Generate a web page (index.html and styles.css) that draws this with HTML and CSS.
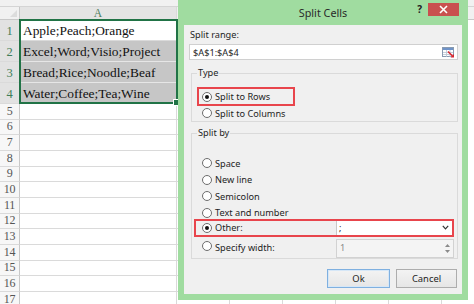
FILE: index.html
```html
<!DOCTYPE html>
<html>
<head>
<meta charset="utf-8">
<link rel="stylesheet" href="styles.css">
</head>
<body>
<div class="sheet">
  <div class="topstrip"></div>
  <div class="row head">
    <div class="rh corner"><span class="tri"></span></div>
    <div class="cell a colhead">A</div>
    <div class="cell b"></div><div class="cell b"></div><div class="cell b"></div><div class="cell b"></div><div class="cell b"></div><div class="cell b"></div>
  </div>
  <div class="row big"><div class="rh sel">1</div><div class="cell a">Apple;Peach;Orange</div><div class="cell b"></div></div>
  <div class="row big"><div class="rh sel">2</div><div class="cell a shade">Excel;Word;Visio;Project</div><div class="cell b"></div></div>
  <div class="row big"><div class="rh sel">3</div><div class="cell a shade">Bread;Rice;Noodle;Beaf</div><div class="cell b"></div></div>
  <div class="row big"><div class="rh sel">4</div><div class="cell a shade">Water;Coffee;Tea;Wine</div><div class="cell b"></div></div>
  <div class="row"><div class="rh">5</div><div class="cell a"></div><div class="cell b"></div></div>
  <div class="row"><div class="rh">6</div><div class="cell a"></div><div class="cell b"></div></div>
  <div class="row"><div class="rh">7</div><div class="cell a"></div><div class="cell b"></div></div>
  <div class="row"><div class="rh">8</div><div class="cell a"></div><div class="cell b"></div></div>
  <div class="row"><div class="rh">9</div><div class="cell a"></div><div class="cell b"></div></div>
  <div class="row"><div class="rh">10</div><div class="cell a"></div><div class="cell b"></div></div>
  <div class="row"><div class="rh">11</div><div class="cell a"></div><div class="cell b"></div></div>
  <div class="row"><div class="rh">12</div><div class="cell a"></div><div class="cell b"></div></div>
  <div class="row"><div class="rh">13</div><div class="cell a"></div><div class="cell b"></div></div>
  <div class="row"><div class="rh">14</div><div class="cell a"></div><div class="cell b"></div></div>
  <div class="row"><div class="rh">15</div><div class="cell a"></div><div class="cell b"></div></div>
  <div class="row"><div class="rh">16</div><div class="cell a"></div><div class="cell b"></div></div>
  <div class="row"><div class="rh">17</div><div class="cell a"></div><div class="cell b"></div><div class="cell b"></div><div class="cell b"></div><div class="cell b"></div><div class="cell b"></div><div class="cell b"></div></div>
  <div class="selection"><span class="handle"></span></div>
</div>

<div class="dialog">
  <div class="titlebar">
    <span class="title">Split Cells</span>
    <span class="help">?</span>
    <span class="close"><svg width="9" height="9" viewBox="0 0 9 9"><path d="M1 1L8 8M8 1L1 8" stroke="#fff" stroke-width="1.6"/></svg></span>
  </div>
  <div class="body">
    <div class="label">Split range:</div>
    <div class="range">
      <span>$A$1:$A$4</span>
      <svg class="picker" width="13" height="11" viewBox="0 0 13 11">
        <rect x="0.5" y="0.5" width="11" height="9" fill="#fff" stroke="#8a9bb0"/>
        <rect x="1" y="1" width="10" height="2" fill="#6f93c8"/>
        <path d="M1 5.5H11M1 7.5H11M4.5 3V10M8 3V10" stroke="#b9c4d2" stroke-width="0.8"/>
        <path d="M6 4.5L10.5 9" stroke="#d9272e" stroke-width="1.6"/>
        <path d="M12 10.5H8.5L12 7Z" fill="#d9272e"/>
      </svg>
    </div>

    <fieldset class="group type">
      <legend>Type</legend>
      <div class="opt mark-rows"><span class="radio on"></span>Split to Rows</div>
      <div class="opt"><span class="radio"></span>Split to Columns</div>
    </fieldset>

    <fieldset class="group by">
      <legend>Split by</legend>
      <div class="opt"><span class="radio"></span>Space</div>
      <div class="opt"><span class="radio"></span>New line</div>
      <div class="opt"><span class="radio"></span>Semicolon</div>
      <div class="opt"><span class="radio"></span>Text and number</div>
      <div class="opt mark-other"><span class="radio on"></span><span class="opt-label">Other:</span>
        <div class="combo"><span>;</span><svg width="7" height="5" viewBox="0 0 7 5"><path d="M0.8 0.8L3.5 3.8L6.2 0.8" fill="none" stroke="#333" stroke-width="1.2"/></svg></div>
      </div>
      <div class="opt spec"><span class="radio"></span><span class="opt-label">Specify width:</span>
        <div class="spin"><span>1</span>
          <span class="arrows">
            <svg width="5" height="3" viewBox="0 0 5 3"><path d="M0 3L2.5 0L5 3Z" fill="#8a8a8a"/></svg>
            <svg width="5" height="3" viewBox="0 0 5 3"><path d="M0 0L2.5 3L5 0Z" fill="#8a8a8a"/></svg>
          </span>
        </div>
      </div>
    </fieldset>

    <div class="buttons">
      <button class="btn default">Ok</button>
      <button class="btn">Cancel</button>
    </div>
  </div>
</div>
</body>
</html>
```

FILE: styles.css
```css
html, body {
  margin: 0;
  padding: 0;
  width: 474px;
  height: 304px;
  overflow: hidden;
  background: #fff;
}

.sheet {
  position: relative;
  width: 474px;
  height: 304px;
  overflow: hidden;
  font-family: "Liberation Serif", "Times New Roman", serif;
}

.topstrip {
  height: 6px;
  background: #f1f1f1;
  border-bottom: 1px solid #d4d4d4;
}

.row {
  display: flex;
  height: 15.67px;
  box-sizing: border-box;
}
.row.big { height: 21px; }
.row.head { height: 13px; }

.rh {
  width: 20px;
  flex: none;
  box-sizing: border-box;
  background: #f7f7f7;
  border-right: 1px solid #c8c8c8;
  border-bottom: 1px solid #dadada;
  color: #555;
  font-size: 12px;
  line-height: 13px;
  display: flex;
  align-items: center;
  justify-content: center;
  letter-spacing: -0.3px;
}
.rh.sel {
  background: #e2e2e2;
  color: #3f7d58;
  font-size: 12.5px;
  padding-top: 2px;
}
.corner {
  background: #f1f1f1;
  border-bottom: 1px solid #c8c8c8;
  position: relative;
}
.tri {
  position: absolute;
  right: 2px;
  bottom: 2px;
  width: 0;
  height: 0;
  border-left: 7px solid transparent;
  border-bottom: 7px solid #dcdcdc;
}

.cell {
  box-sizing: border-box;
  border-right: 1px solid #dadada;
  border-bottom: 1px solid #dadada;
  background: #fff;
  flex: none;
}
.cell.a {
  width: 157px;
  font-size: 13.4px;
  color: #111;
  padding: 0 0 1px 3px;
  display: flex;
  align-items: flex-end;
  white-space: nowrap;
  overflow: hidden;
}
.cell.b { width: 53px; }
.cell.shade {
  background: #c6c6c6;
  border-bottom-color: #e6e6e6;
}
.cell.a.colhead {
  background: #e4e4e4;
  color: #4e7d5f;
  font-size: 11.5px;
  line-height: 12px;
  justify-content: center;
  align-items: center;
  padding: 0;
  border-bottom: 1px solid #c0c0c0;
}
.head .cell.b {
  background: #f1f1f1;
  border-bottom: 1px solid #c8c8c8;
}

.selection {
  position: absolute;
  left: 19px;
  top: 19px;
  width: 159px;
  height: 85px;
  box-sizing: border-box;
  border: 2px solid #217346;
}
.handle {
  position: absolute;
  right: -4px;
  bottom: -4px;
  width: 5px;
  height: 5px;
  background: #217346;
  border: 1px solid #fff;
}

/* Dialog */
.dialog {
  position: absolute;
  left: 178px;
  top: 0;
  width: 290px;
  height: 300px;
  box-sizing: border-box;
  background: #a0dca0;
  padding: 0 6px 6px 6px;
  display: flex;
  flex-direction: column;
  font-family: "Noto Sans", "Open Sans", sans-serif;
  font-size: 9.2px;
  color: #1e1e1e;
}

.titlebar {
  height: 25px;
  flex: none;
  position: relative;
  display: flex;
  align-items: center;
  justify-content: center;
}
.title {
  font-size: 10.8px;
  color: #2a2a2a;
  padding-bottom: 1px;
}
.help {
  position: absolute;
  right: 40px;
  top: 2px;
  font-size: 10px;
  font-weight: bold;
  color: #222;
}
.close {
  position: absolute;
  right: 3px;
  top: 3px;
  width: 31px;
  height: 13px;
  background: #c9504f;
  display: flex;
  align-items: center;
  justify-content: center;
}

.body {
  flex: 1;
  background: #f0f0f0;
  display: flex;
  flex-direction: column;
  padding: 3px 4px 0 5px;
}

.label {
  height: 14px;
  line-height: 14px;
  padding-left: 1px;
}

.range {
  margin-top: 2px;
  height: 16px;
  box-sizing: border-box;
  background: #fff;
  border: 1px solid #d0d0d0;
  display: flex;
  align-items: center;
  justify-content: space-between;
  padding: 0 2px 0 3px;
}

.group {
  margin: 6px 0 0 2px;
  padding: 0;
  border: 1px solid #dadada;
  min-inline-size: 0;
}
.group legend {
  margin-left: 5px;
  padding: 0 1px;
  height: 14px;
  line-height: 14px;
}
.group.type { height: 56px; box-sizing: border-box; padding-top: 9px; }
.group.by { margin-top: 4px; height: 133px; box-sizing: border-box; padding-top: 15px; }

.opt {
  display: flex;
  align-items: center;
  height: 16.5px;
  padding-left: 10px;
  white-space: nowrap;
}
.radio {
  width: 10px;
  height: 10px;
  box-sizing: border-box;
  border: 1px solid #6d6d6d;
  border-radius: 50%;
  background: #fff;
  margin-right: 3px;
  flex: none;
  position: relative;
}
.radio.on::after {
  content: "";
  position: absolute;
  left: 2px;
  top: 2px;
  width: 4px;
  height: 4px;
  border-radius: 50%;
  background: #111;
}

.mark-rows {
  width: 94px;
  height: 15px;
  margin: 0 0 2px 7px;
  padding-left: 3px;
  outline: 2px solid #e8454c;
  box-sizing: border-box;
}
.type .opt:not(.mark-rows) { height: 14px; }

.mark-other {
  margin: -0.5px 5px 0 4px;
  padding-left: 6px;
  height: 14px;
  outline: 2px solid #e8454c;
}
.opt-label { width: 121px; }
.combo {
  flex: 1;
  height: 16px;
  box-sizing: border-box;
  background: #fff;
  border: 1px solid #c8c8c8;
  display: flex;
  align-items: center;
  justify-content: space-between;
  padding: 0 3px 0 2px;
  margin-right: -1px;
}

.spec {
  height: 19px;
  margin-top: 4px;
  align-items: flex-start;
  padding-right: 3px;
}
.spec .radio, .spec .opt-label { margin-top: 2px; }
.spin {
  flex: 1;
  height: 19px;
  box-sizing: border-box;
  background: #f4f4f4;
  border: 1px solid #d2d2d2;
  color: #8a8a8a;
  display: flex;
  justify-content: space-between;
  padding: 1px 3px 0 3px;
}
.arrows {
  display: flex;
  flex-direction: column;
  gap: 3px;
  padding-top: 3px;
}
.arrows svg { display: block; }

.buttons {
  display: flex;
  justify-content: flex-end;
  gap: 6px;
  margin-top: 10px;
  padding-right: 1px;
}
.btn {
  height: 19px;
  box-sizing: border-box;
  font-family: "Noto Sans", "Open Sans", sans-serif;
  font-size: 9.4px;
  color: #1e1e1e;
  background: linear-gradient(#f3f3f3, #e6e6e6);
  border: 1px solid #adadad;
  padding: 0;
  width: 61px;
}
.btn.default {
  width: 63px;
  border-color: #7fb0e0;
  box-shadow: inset 0 0 0 1px #d6e7f7;
}
```
